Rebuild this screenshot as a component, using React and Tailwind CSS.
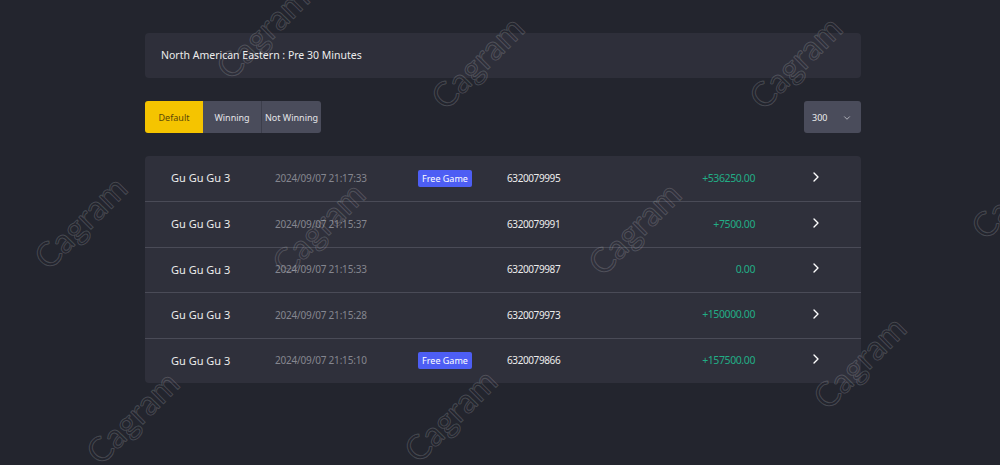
import React from 'react';
import { ChevronRight, ChevronDown } from 'lucide-react';

const rows = [
    { name: 'Gu Gu Gu 3', time: '2024/09/07 21:17:33', free: true, id: '6320079995', amount: '+536250.00' },
    { name: 'Gu Gu Gu 3', time: '2024/09/07 21:15:37', free: false, id: '6320079991', amount: '+7500.00' },
    { name: 'Gu Gu Gu 3', time: '2024/09/07 21:15:33', free: false, id: '6320079987', amount: '0.00' },
    { name: 'Gu Gu Gu 3', time: '2024/09/07 21:15:28', free: false, id: '6320079973', amount: '+150000.00' },
    { name: 'Gu Gu Gu 3', time: '2024/09/07 21:15:10', free: true, id: '6320079866', amount: '+157500.00' },
];

// watermark centres, measured off the screen
const marks = [
    'left-[262px] top-[32px]',
    'left-[477px] top-[62px]',
    'left-[795px] top-[62px]',
    'left-[80px] top-[222px]',
    'left-[318px] top-[228px]',
    'left-[634px] top-[228px]',
    'left-[1017px] top-[192px]',
    'left-[859px] top-[362px]',
    'left-[132px] top-[417px]',
    'left-[450px] top-[415px]',
];

const App = () => {
    return (
        <div className="relative min-h-screen overflow-hidden bg-[#23252e] pt-[33px] font-['Noto_Sans',sans-serif]">
            {/* Timezone header */}
            <div className="ml-[145px] flex h-[45px] w-[716px] items-center rounded-[4px] bg-[#2e2f3a] px-[16px]">
                <p className="text-[10.5px] text-[#ececec]">North American Eastern : Pre 30 Minutes</p>
            </div>

            {/* Filters */}
            <div className="ml-[145px] mt-[23px] flex w-[716px] items-center justify-between">
                <div className="flex h-[32px] text-[9px]">
                    <button className="w-[58px] rounded-l-[3px] bg-[#f5c400] pt-[2px] text-[#5a4808]">Default</button>
                    <button className="w-[59px] border-r border-[#3c3e4b] bg-[#4a4c5b] pt-[2px] text-[#e4e4e8]">Winning</button>
                    <button className="w-[59px] rounded-r-[3px] bg-[#4a4c5b] pt-[2px] text-[#e4e4e8]">Not Winning</button>
                </div>
                <div className="flex h-[32px] w-[57px] items-center justify-between rounded-[3px] bg-[#4a4c5b] pl-[8px] pr-[9px] pt-[1px]">
                    <span className="text-[9px] text-[#ececec]">300</span>
                    <ChevronDown size={10} strokeWidth={2} className="text-[#c4c5cc]" />
                </div>
            </div>

            {/* Records */}
            <div className="ml-[145px] mt-[23px] w-[716px] rounded-[4px] bg-[#2f303b]">
                {rows.map((r, i) => (
                    <div
                        key={r.id}
                        className={`flex h-[45.4px] items-center pl-[26px] ${i > 0 ? 'border-t border-[#4a4b57]' : ''}`}
                    >
                        <div className="w-[104px] text-[11px] text-[#ececec]">{r.name}</div>
                        <div className="w-[143px] text-[10px] tracking-[-0.2px] text-[#85868f]">{r.time}</div>
                        <div className="w-[89px]">
                            {r.free && (
                                <span className="flex h-[17px] w-[54px] items-center justify-center rounded-[2px] bg-[#4d5ef4] text-[9px] text-white">
                                    Free Game
                                </span>
                            )}
                        </div>
                        <div className="w-[100px] text-[10px] tracking-[-0.4px] text-[#ececec]">{r.id}</div>
                        <div className="w-[148px] text-right text-[10.5px] tracking-[-0.4px] text-[#22ad86]">{r.amount}</div>
                        <ChevronRight size={16} strokeWidth={2} className="ml-[53px] mb-[3px] text-white" />
                    </div>
                ))}
            </div>

            {/* Watermark */}
            <div className="pointer-events-none absolute inset-0">
                {marks.map((m) => (
                    <span
                        key={m}
                        className={`absolute ${m} -translate-x-1/2 -translate-y-1/2 -rotate-45 whitespace-nowrap font-['Lato',sans-serif] text-[34px] leading-none text-transparent [-webkit-text-stroke:1px_rgba(255,255,255,0.17)]`}
                    >
                        Cagram
                    </span>
                ))}
            </div>
        </div>
    );
};

export default App;
